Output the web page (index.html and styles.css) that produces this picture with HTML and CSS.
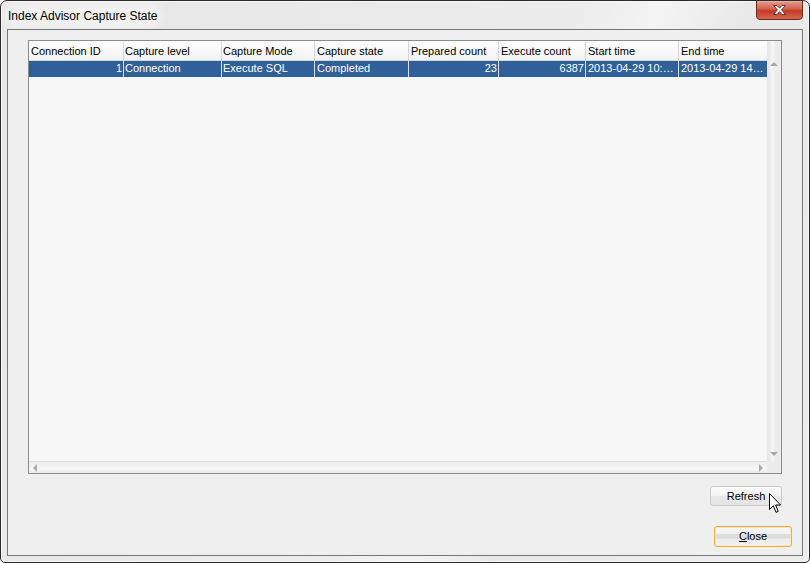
FILE: index.html
```html
<!DOCTYPE html>
<html>
<head>
<meta charset="utf-8">
<link rel="stylesheet" href="styles.css">
</head>
<body>
<div class="window">
  <div class="titlebar">
    <span class="title">Index Advisor Capture State</span>
    <div class="close-x">
      <svg width="47" height="20" viewBox="0 0 47 20">
        <defs>
          <linearGradient id="rg" x1="0" y1="0" x2="0" y2="1">
            <stop offset="0" stop-color="#e9a495"/>
            <stop offset="0.45" stop-color="#d4614e"/>
            <stop offset="0.55" stop-color="#c33a26"/>
            <stop offset="1" stop-color="#d86a52"/>
          </linearGradient>
        </defs>
        <path d="M0.5 0 V16 Q0.5 19.5 4 19.5 H43 Q46.5 19.5 46.5 16 V0" fill="url(#rg)" stroke="#6b2c22"/>
        <path d="M1.5 1 H45.5" stroke="#f3c3b8" stroke-width="1"/>
        <path d="M17.5 5.5 L21 5.5 L23.5 8.2 L26 5.5 L29.5 5.5 L25.5 9.8 L29.5 14.5 L26 14.5 L23.5 11.6 L21 14.5 L17.5 14.5 L21.5 9.8 Z" fill="#fff" stroke="#5a2a24" stroke-width="0.9" stroke-linejoin="round"/>
      </svg>
    </div>
  </div>
  <div class="client">
    <div class="gridbox">
      <div class="gridmain">
        <div class="row head">
          <div class="cell c1">Connection ID</div>
          <div class="cell c2">Capture level</div>
          <div class="cell c3">Capture Mode</div>
          <div class="cell c4">Capture state</div>
          <div class="cell c5">Prepared count</div>
          <div class="cell c6">Execute count</div>
          <div class="cell c7">Start time</div>
          <div class="cell c8">End time</div>
        </div>
        <div class="row sel">
          <div class="cell c1 num">1</div>
          <div class="cell c2">Connection</div>
          <div class="cell c3">Execute SQL</div>
          <div class="cell c4">Completed</div>
          <div class="cell c5 num">23</div>
          <div class="cell c6 num">6387</div>
          <div class="cell c7">2013-04-29 10:04:12</div>
          <div class="cell c8">2013-04-29 14:22:51</div>
        </div>
      </div>
      <div class="vscroll">
        <span class="arr up"></span>
        <span class="arr down"></span>
      </div>
      <div class="hscroll">
        <span class="arr left"></span>
        <span class="arr right"></span>
      </div>
      <div class="corner"></div>
    </div>
    <button class="btn refresh">Refresh
      <svg class="cursor" width="13" height="21" viewBox="0 0 13 21">
        <path d="M0.5 0.5 L0.5 16.5 L4.3 12.8 L7 19.3 L9.2 18.4 L6.6 12 L11.6 12 Z" fill="#fff" stroke="#000" stroke-width="1" stroke-linejoin="miter"/>
      </svg>
    </button>
    <button class="btn close"><u>C</u>lose</button>
  </div>
</div>
</body>
</html>
```
FILE: styles.css
```css
* { box-sizing: border-box; }
html, body { margin: 0; padding: 0; }
body {
  background: #ffffff;
  font-family: "Liberation Sans", Arial, sans-serif;
  font-size: 11px;
  color: #000;
}
.window {
  width: 810px;
  height: 563px;
  border: 1px solid #2a2a2a;
  border-radius: 7px 7px 5px 5px;
  background: linear-gradient(115deg, #e6e6e6 0%, #ececec 55%, #f4f4f4 62%, #e9e9e9 70%, #ededed 100%);
  box-shadow: inset 0 0 0 1px #f8f8f8;
  display: flex;
  flex-direction: column;
  overflow: hidden;
}
.titlebar {
  height: 28px;
  display: flex;
  align-items: flex-start;
  justify-content: space-between;
  padding-left: 7px;
  padding-right: 6px;
}
.title {
  font-size: 12px;
  line-height: 16px;
  margin-top: 7px;
  color: #000;
  background: rgba(255,255,255,0.45);
  box-shadow: 0 0 8px 5px rgba(255,255,255,0.45);
  border-radius: 8px;
}
.close-x {
  margin-top: -1px;
  width: 47px;
  height: 20px;
}
.close-x svg { display: block; }
.client {
  flex: 1;
  margin: 0 6px 6px 6px;
  border: 1px solid #767676;
  background: #efefef;
  display: flex;
  flex-direction: column;
  padding: 10px 20px 8px 20px;
}
.gridbox {
  height: 434px;
  border: 1px solid #8c8c8c;
  background: #f7f7f7;
  display: grid;
  grid-template-columns: 738px 14px;
  grid-template-rows: 420px 12px;
}
.gridmain {
  overflow: hidden;
}
.row {
  display: flex;
}
.cell {
  flex: none;
  white-space: nowrap;
  overflow: hidden;
  text-overflow: ellipsis;
  padding: 0 2px 0 2px;
}
.c1 { width: 95px; }
.c2 { width: 98px; padding-left: 1px; }
.c3 { width: 93px; padding-left: 1px; }
.c4 { width: 94px; padding-left: 2px; }
.c5 { width: 90px; padding-left: 2px; }
.c6 { width: 87px; padding-left: 2px; }
.c7 { width: 93px; padding-left: 2px; }
.c8 { width: 88px; padding-left: 2px; }
.head .cell {
  height: 20px;
  line-height: 19px;
  padding-top: 1px;
  border-right: 1px solid #d6d6d6;
  border-bottom: 1px solid #d6d6d6;
  background: linear-gradient(#fdfdfd, #f4f4f4);
}
.head .c8 { border-right: none; }
.sel .cell {
  height: 16px;
  line-height: 15px;
  background: #30609a;
  color: #fff;
  border-right: 1px solid #d8e0ea;
}
.sel .c8 { border-right: none; }
.sel .num { text-align: right; padding-right: 1px; }
.vscroll {
  background: linear-gradient(90deg, #e8e8e8 0px, #eaeaea 3px, #f4f4f4 4px, #f4f4f4 7px, #ececec 8px, #ececec 14px);
  display: flex;
  flex-direction: column;
  justify-content: space-between;
  align-items: center;
  padding: 21px 0 5px 0;
}
.hscroll {
  border-top: 1px solid #dedede;
  background: linear-gradient(#f0f0f0 0px, #f0f0f0 4px, #f6f6f6 5px, #f6f6f6 8px, #ededed 9px);
  display: flex;
  justify-content: space-between;
  align-items: center;
  padding: 0 4px 0 4px;
}
.corner {
  background: #ececec;
}
.arr {
  width: 0;
  height: 0;
  display: block;
}
.arr.up {
  border-left: 4px solid transparent;
  border-right: 4px solid transparent;
  border-bottom: 4px solid #a9a9a9;
}
.arr.down {
  border-left: 4px solid transparent;
  border-right: 4px solid transparent;
  border-top: 4px solid #a9a9a9;
}
.arr.left {
  border-top: 4px solid transparent;
  border-bottom: 4px solid transparent;
  border-right: 4px solid #a9a9a9;
}
.arr.right {
  border-top: 4px solid transparent;
  border-bottom: 4px solid transparent;
  border-left: 4px solid #a9a9a9;
}
.btn {
  font-family: "Liberation Sans", Arial, sans-serif;
  font-size: 11px;
  color: #000;
  padding: 0;
  border-radius: 3px;
  align-self: flex-end;
  text-align: center;
}
.refresh {
  position: relative;
  margin-top: 12px;
  width: 72px;
  height: 20px;
  border: 1px solid #cbcbcb;
  background: linear-gradient(#fbfbfb 0%, #f3f3f3 50%, #e9e9e9 51%, #e4e4e4 100%);
  line-height: 17px;
}
.cursor {
  position: absolute;
  left: 58px;
  top: 6px;
}
.close {
  margin-top: 20px;
  margin-right: -10px;
  width: 78px;
  height: 21px;
  border: 1px solid #f0ad3c;
  background: linear-gradient(#f6f6f6 0%, #f1f1f1 35%, #dedede 36%, #dcdcdc 60%, #ececec 61%, #f2f2f2 100%);
  box-shadow: inset 0 0 0 1px #fbe6bd;
  line-height: 19px;
}
.close u { text-decoration: underline; }
```
